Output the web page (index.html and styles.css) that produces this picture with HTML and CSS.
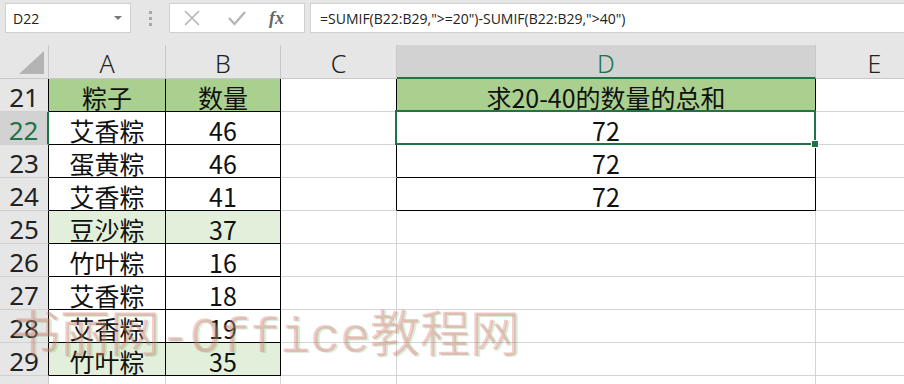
FILE: index.html
```html
<!DOCTYPE html>
<html lang="zh">
<head>
<meta charset="utf-8">
<title>SUMIF</title>
<link rel="stylesheet" href="styles.css">
</head>
<body>
<div class="app">
  <div class="topbar">
    <div class="namebox"><span class="ref">D22</span><span class="caret"></span></div>
    <div class="grip"><span></span><span></span><span></span></div>
    <div class="fxbox">
      <svg class="ico" width="18" height="18" viewBox="0 0 18 18"><path d="M2 2 L16 16 M16 2 L2 16" stroke="#b5b5b5" stroke-width="1.6" fill="none"/></svg>
      <svg class="ico" width="20" height="18" viewBox="0 0 20 18"><path d="M2 9 L7.5 15 L18 3" stroke="#b5b5b5" stroke-width="2.4" fill="none"/></svg>
      <span class="fx">fx</span>
    </div>
    <div class="formula">=SUMIF(B22:B29,"&gt;=20")-SUMIF(B22:B29,"&gt;40")</div>
  </div>
  <div class="sheet">
    <div class="corner"><span class="tri"></span></div>
    <div class="ch">A</div>
    <div class="ch">B</div>
    <div class="ch">C</div>
    <div class="ch sel">D</div>
    <div class="ch">E</div>

    <div class="rh bl">21</div>
    <div class="c bk g">粽子</div>
    <div class="c bk g">数量</div>
    <div class="c bl"></div>
    <div class="c bk g">求20-40的数量的总和</div>
    <div class="c"></div>

    <div class="rh sel">22</div>
    <div class="c bk">艾香粽</div>
    <div class="c bk">46</div>
    <div class="c bl"></div>
    <div class="c bk active">72</div>
    <div class="c"></div>

    <div class="rh bl">23</div>
    <div class="c bk">蛋黄粽</div>
    <div class="c bk">46</div>
    <div class="c bl"></div>
    <div class="c bk">72</div>
    <div class="c"></div>

    <div class="rh bl">24</div>
    <div class="c bk">艾香粽</div>
    <div class="c bk">41</div>
    <div class="c bl"></div>
    <div class="c bk">72</div>
    <div class="c"></div>

    <div class="rh bl">25</div>
    <div class="c bk lg">豆沙粽</div>
    <div class="c bk lg">37</div>
    <div class="c"></div>
    <div class="c"></div>
    <div class="c"></div>

    <div class="rh bl">26</div>
    <div class="c bk">竹叶粽</div>
    <div class="c bk">16</div>
    <div class="c"></div>
    <div class="c"></div>
    <div class="c"></div>

    <div class="rh bl">27</div>
    <div class="c bk">艾香粽</div>
    <div class="c bk">18</div>
    <div class="c"></div>
    <div class="c"></div>
    <div class="c"></div>

    <div class="rh bl">28</div>
    <div class="c bk">艾香粽</div>
    <div class="c bk">19</div>
    <div class="c"></div>
    <div class="c"></div>
    <div class="c"></div>

    <div class="rh bl">29</div>
    <div class="c bk lg">竹叶粽</div>
    <div class="c bk lg">35</div>
    <div class="c"></div>
    <div class="c"></div>
    <div class="c"></div>

    <div class="rh"></div>
    <div class="c"></div>
    <div class="c"></div>
    <div class="c"></div>
    <div class="c"></div>
    <div class="c"></div>
  </div>
  <div class="watermark">书丽网-Office教程网</div>
</div>
</body>
</html>
```
FILE: styles.css
```css
* { box-sizing: border-box; }
html, body { margin: 0; padding: 0; }
body {
  width: 904px;
  height: 384px;
  overflow: hidden;
  background: #fff;
  font-family: "Noto Sans CJK SC", "Noto Sans", sans-serif;
}
.app { position: relative; width: 904px; height: 384px; overflow: hidden; }

.topbar {
  height: 45px;
  background: #e6e6e6;
  display: flex;
  align-items: flex-start;
  padding: 3px 0 0 5px;
}
.namebox {
  width: 126px;
  height: 30px;
  background: #fff;
  border: 1px solid #d0d0d0;
  display: flex;
  align-items: center;
  justify-content: space-between;
  padding: 0 8px 0 7px;
}
.ref { font-family: "Open Sans", "Noto Sans", sans-serif; font-size: 14px; color: #222; }
.caret {
  width: 0; height: 0;
  border-left: 4px solid transparent;
  border-right: 4px solid transparent;
  border-top: 4px solid #777;
}
.grip {
  width: 38px;
  height: 30px;
  display: flex;
  flex-direction: column;
  align-items: center;
  justify-content: center;
  gap: 3px;
}
.grip span { width: 3px; height: 3px; background: #a8a8a8; }
.fxbox {
  width: 136px;
  height: 30px;
  background: #fff;
  border: 1px solid #d0d0d0;
  display: flex;
  align-items: center;
  padding-left: 13px;
  gap: 26px;
}
.fx {
  font-family: "Liberation Serif", serif;
  font-style: italic;
  font-weight: bold;
  font-size: 18px;
  color: #666;
  margin-left: -4px;
}
.formula {
  flex: 1;
  margin-left: 5px;
  height: 30px;
  background: #fff;
  border: 1px solid #d0d0d0;
  border-right: none;
  display: flex;
  align-items: center;
  padding-left: 9px;
  font-family: "Open Sans", "Noto Sans", sans-serif;
  font-size: 14px;
  color: #222;
  white-space: nowrap;
}

.sheet {
  display: grid;
  grid-template-columns: 49px 117px 115px 116px 419px 118px;
  grid-template-rows: 34px repeat(10, 33px);
  width: 934px;
}
.sheet > div {
  display: flex;
  align-items: center;
  justify-content: center;
  font-size: 25px;
  color: #111;
  line-height: 1;
  white-space: nowrap;
  padding-top: 4px;
}
.corner {
  background: #e6e6e6;
  border-right: 1px solid #c8c8c8;
  border-bottom: 1px solid #c8c8c8;
  position: relative;
}
.tri {
  position: absolute;
  right: 4px;
  bottom: 4px;
  width: 0; height: 0;
  border-left: 25px solid transparent;
  border-bottom: 23px solid #b4b4b4;
}
.ch {
  background: #e6e6e6;
  border-right: 1px solid #c8c8c8;
  border-bottom: 1px solid #c8c8c8;
  font-family: "Noto Sans", sans-serif;
  font-weight: 300;
  color: #222 !important;
}
.ch.sel {
  background: #d2d2d2;
  color: #217346 !important;
  border-bottom: 2px solid #217346;
}
.rh {
  background: #e6e6e6;
  border-right: 1px solid #c8c8c8;
  border-bottom: 1px solid #d0d0d0;
  font-family: "Noto Sans", sans-serif;
  font-size: 26px !important;
  color: #222 !important;
}
.rh.sel {
  background: #d2d2d2;
  color: #217346 !important;
  border-right: 2px solid #217346;
}
.c {
  background: #fff;
  border-right: 1px solid #d4d4d4;
  border-bottom: 1px solid #d4d4d4;
}
.rh.bl, .c.bl { border-right-color: #000; }
.c.bk { border-right-color: #000; border-bottom-color: #000; }
.g { background: #a9d08e; }
.lg { background: #e2efda; }
.active { position: relative; }
.active::after {
  content: "";
  position: absolute;
  left: -2px; top: -2px; right: -1px; bottom: -1px;
  border: 2px solid #217346;
}
.active::before {
  content: "";
  position: absolute;
  right: -4px;
  bottom: -4px;
  width: 6px;
  height: 6px;
  background: #217346;
  border: 1px solid #fff;
  z-index: 2;
}

.watermark {
  position: absolute;
  left: 10px;
  top: 314px;
  font-family: "Liberation Mono", "Noto Sans CJK SC", monospace;
  font-size: 50px;
  line-height: 1;
  color: rgba(225, 100, 100, 0.33);
  text-shadow: 2px 1px 0 rgba(120, 190, 120, 0.28);
  white-space: nowrap;
  pointer-events: none;
}
```
